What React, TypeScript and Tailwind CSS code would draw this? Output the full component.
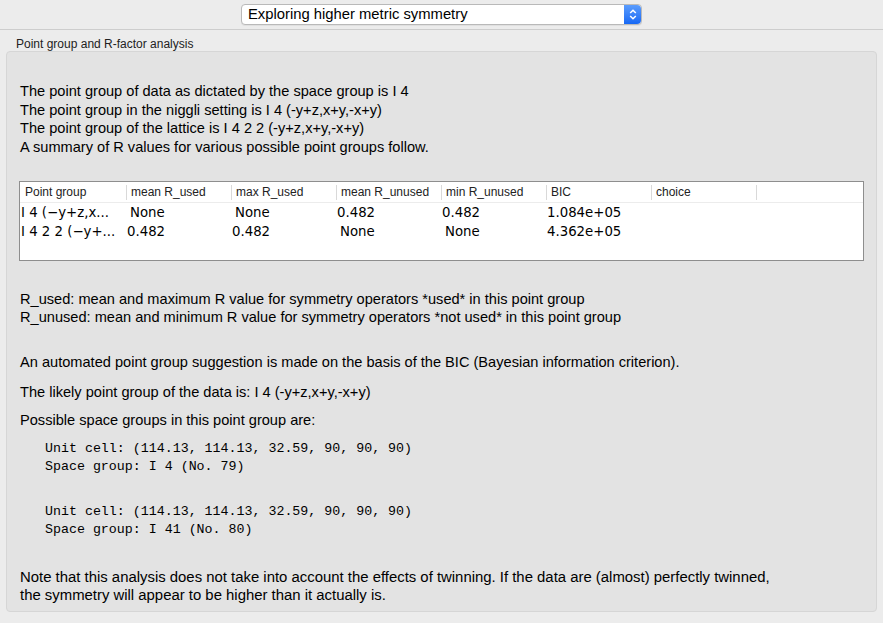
const headers = ["Point group", "mean R_used", "max R_used", "mean R_unused", "min R_unused", "BIC", "choice"];

const rows = [
  ["I 4 (\u2212y+z,x...", "None", "None", "0.482", "0.482", "1.084e+05", ""],
  ["I 4 2 2 (\u2212y+...", "0.482", "0.482", "None", "None", "4.362e+05", ""],
];

const sans = "font-['Helvetica','Liberation_Sans',Arial,sans-serif]";

function Select() {
  return (
    <div className="flex h-[21px] w-[401px] items-stretch rounded-[4px] border border-[#b9b9b9] bg-white shadow-[0_1px_0_rgba(0,0,0,0.05)]">
      <div className={`flex flex-1 items-center pl-[6px] text-[14.8px] text-black ${sans}`}>
        Exploring higher metric symmetry
      </div>
      <div className="flex w-[17px] items-center justify-center rounded-r-[4px] bg-gradient-to-b from-[#5a9cfd] to-[#1668f4]">
        <svg width="8" height="13" viewBox="0 0 8 13" fill="none" stroke="white" strokeWidth="1.5">
          <path d="M1.2 5 L4 2.2 L6.8 5" />
          <path d="M1.2 8 L4 10.8 L6.8 8" />
        </svg>
      </div>
    </div>
  );
}

function Table() {
  return (
    <div className="mx-[12px] h-[80px] border border-[#8e8e8e] bg-white">
      <div className="flex h-[21px] items-center border-b border-[#ececec] font-['Helvetica','Liberation_Sans',sans-serif] text-[12px] text-[#222]">
        {headers.map((h, i) => (
          <div
            key={h}
            className={`flex h-[15px] shrink-0 items-center ${i === 0 ? "w-[106px] pl-[5px]" : "w-[105px] border-l border-[#d9d9d9] pl-[4px]"}`}
          >
            {h}
          </div>
        ))}
        <div className="h-[15px] border-l border-[#d9d9d9]" />
      </div>
      {rows.map((r, ri) => (
        <div key={ri} className="flex h-[19px] items-center font-['DejaVu_Sans',sans-serif] text-[13.3px] text-black">
          {r.map((c, ci) => (
            <div
              key={ci}
              className={`shrink-0 whitespace-nowrap ${ci === 0 ? "w-[106px] pl-[1px]" : "w-[105px]"} ${c === "None" ? "pl-[4px]" : ci === 0 ? "" : "pl-[1px]"}`}
            >
              {c}
            </div>
          ))}
        </div>
      ))}
    </div>
  );
}

export default function App() {
  return (
    <div className={`h-[623px] w-[883px] overflow-hidden bg-[#ececec] ${sans}`}>
      <div className="flex h-[30px] justify-center border-b border-[#cdcdcd] pt-[4px]">
        <Select />
      </div>
      <div className="px-[6px] pt-[7px]">
        <div className="pl-[10px] text-[12px] leading-[14px] text-[#222]">Point group and R-factor analysis</div>
        <div className="h-[561px] rounded-[4px] border border-[#d6d6d6] bg-[#e3e3e3] pt-[30px] text-[14.6px] text-black">
          <div className="pl-[13px] leading-[18.5px]">
            <div>The point group of data as dictated by the space group is I 4</div>
            <div>The point group in the niggli setting is I 4 (-y+z,x+y,-x+y)</div>
            <div>The point group of the lattice is I 4 2 2 (-y+z,x+y,-x+y)</div>
            <div>A summary of R values for various possible point groups follow.</div>
          </div>
          <div className="mt-[25px]">
            <Table />
          </div>
          <div className="mt-[29px] pl-[13px] leading-[18px]">
            <div>R_used: mean and maximum R value for symmetry operators *used* in this point group</div>
            <div>R_unused: mean and minimum R value for symmetry operators *not used* in this point group</div>
          </div>
          <div className="mt-[27px] pl-[13px] leading-[18px]">
            An automated point group suggestion is made on the basis of the BIC (Bayesian information criterion).
          </div>
          <div className="mt-[12px] pl-[13px] leading-[18px]">The likely point group of the data is: I 4 (-y+z,x+y,-x+y)</div>
          <div className="mt-[10px] pl-[13px] leading-[18px]">Possible space groups in this point group are:</div>
          <div className="mt-[11px] pl-[38px] font-['Liberation_Mono','Courier_New',monospace] text-[13.3px] leading-[18px]">
            <div>Unit cell: (114.13, 114.13, 32.59, 90, 90, 90)</div>
            <div>Space group: I 4 (No. 79)</div>
            <div className="mt-[27px]">Unit cell: (114.13, 114.13, 32.59, 90, 90, 90)</div>
            <div>Space group: I 41 (No. 80)</div>
          </div>
          <div className="mt-[30px] pl-[13px] text-[14.9px] leading-[17.5px]">
            <div>Note that this analysis does not take into account the effects of twinning. If the data are (almost) perfectly twinned,</div>
            <div>the symmetry will appear to be higher than it actually is.</div>
          </div>
        </div>
      </div>
    </div>
  );
}
